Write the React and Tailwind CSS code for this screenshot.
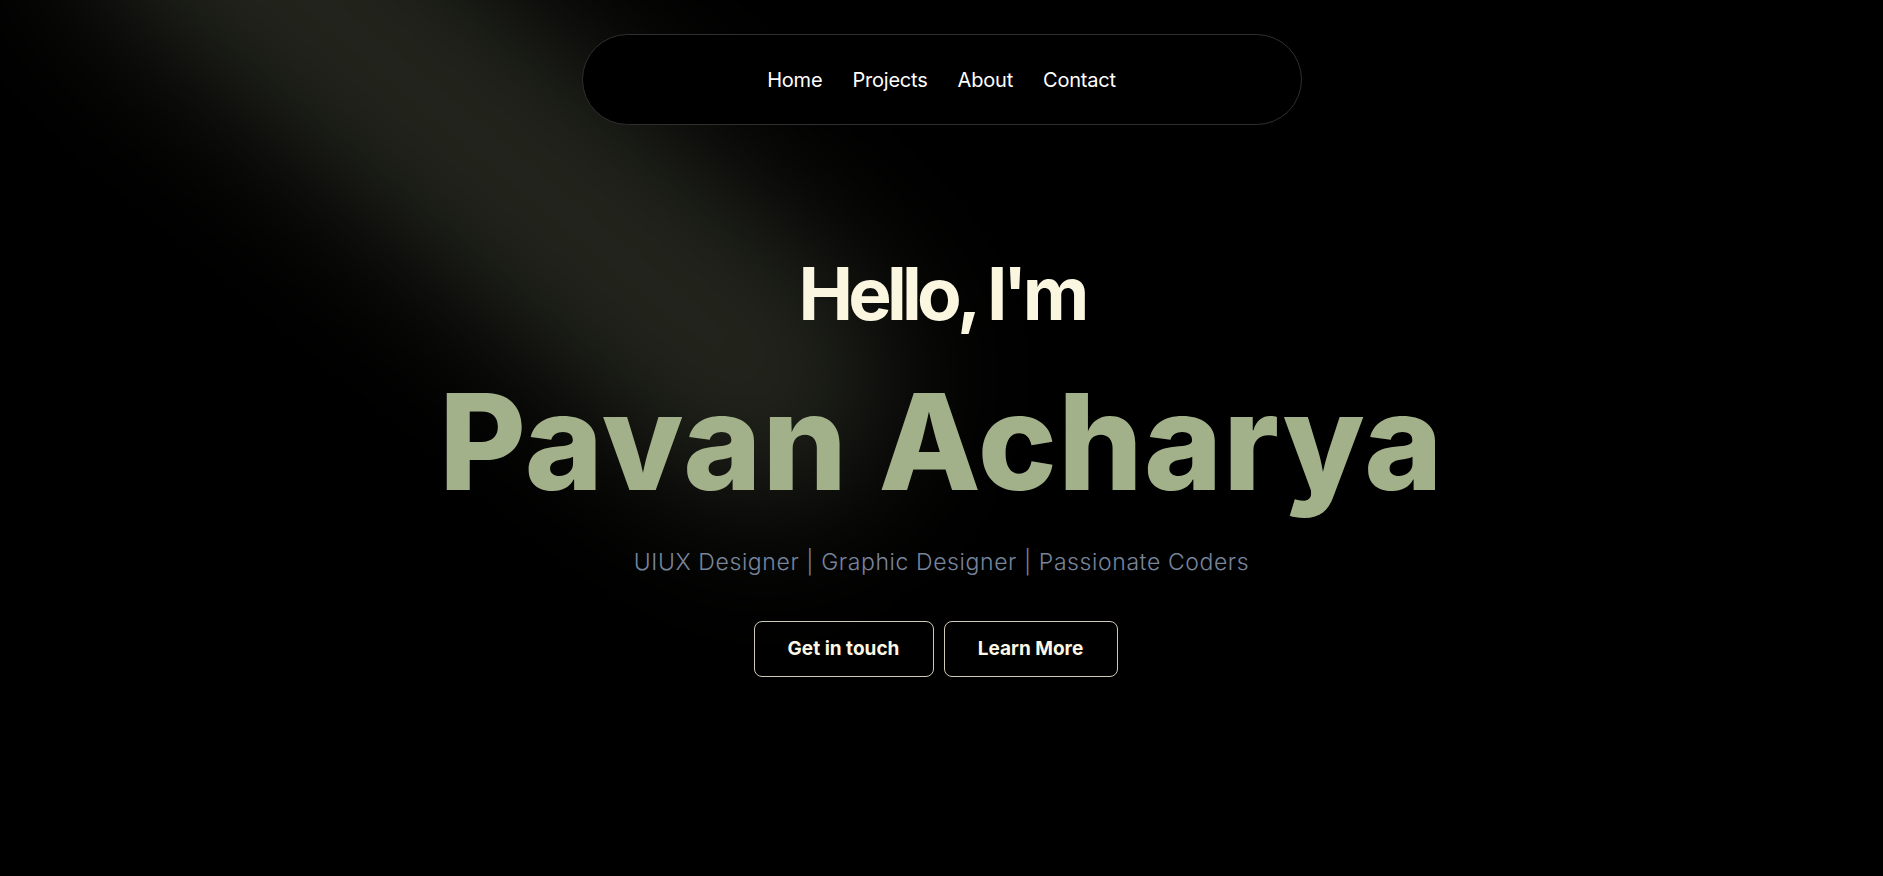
export default function App() {
  return (
    <div className="relative min-h-screen w-full overflow-hidden bg-black font-['Inter',sans-serif]">
      {/* soft light beam in the top-left */}
      <div className="pointer-events-none absolute left-[-20px] top-[10px] h-[260px] w-[1000px] rotate-[40deg] rounded-full bg-[#23251d] blur-[70px]" />

      <div className="relative flex flex-col items-center">
        <header className="pt-[34px]">
          <nav className="flex h-[91px] w-[720px] items-center justify-center gap-[30px] rounded-full border border-[#2f2f2f] bg-black text-[20px] tracking-[-0.01em] text-white">
            <a href="#">Home</a>
            <a href="#">Projects</a>
            <a href="#">About</a>
            <a href="#">Contact</a>
          </nav>
        </header>

        <section className="mt-[132px] flex flex-col items-center">
          <h2 className="text-[73px] font-bold leading-none tracking-[-0.065em] text-[#faf6df]">
            Hello, I'm
          </h2>
          <h1 className="mt-[45px] text-[133px] font-extrabold leading-none tracking-[0.009em] text-[#a3b18a]">
            Pavan Acharya
          </h1>
          <p className="mt-[43px] text-[23px] font-light leading-none tracking-[0.026em] text-[#77859c]">
            UIUX Designer | Graphic Designer | Passionate Coders
          </p>
          <div className="mr-[12px] mt-[47px] flex gap-[10px]">
            <button className="h-[56px] w-[180px] rounded-lg border border-[#cfcab5] text-[19px] font-bold text-[#fdf8e6]">
              Get in touch
            </button>
            <button className="h-[56px] w-[174px] rounded-lg border border-[#cfcab5] text-[19px] font-bold text-[#fdf8e6]">
              Learn More
            </button>
          </div>
        </section>
      </div>
    </div>
  )
}
